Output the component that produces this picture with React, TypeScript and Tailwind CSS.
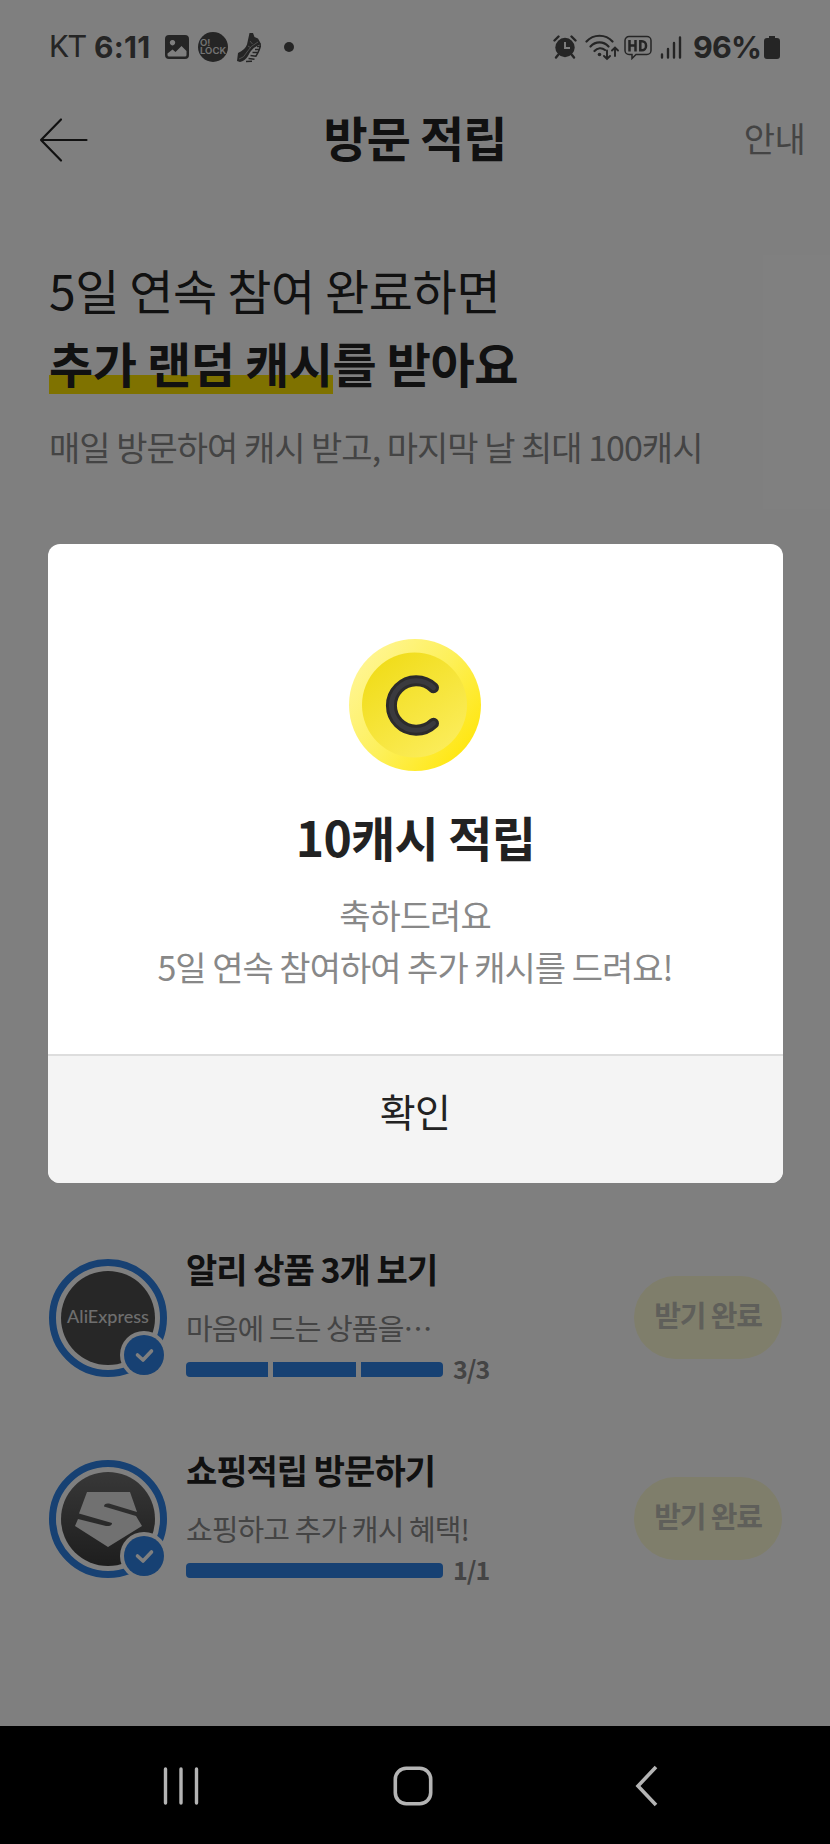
import React from 'react';

interface Mission {
  id: string;
  title: string;
  desc: string;
  done: number;
  total: number;
  logo: React.ReactNode;
}

const missions: Mission[] = [
  { id: 'ali', title: '알리 상품 3개 보기', desc: '마음에 드는 상품을…', done: 3, total: 3, logo: <AliLogo /> },
  { id: 'shop', title: '쇼핑적립 방문하기', desc: '쇼핑하고 추가 캐시 혜택!', done: 1, total: 1, logo: <ShopLogo /> },
];

function AliLogo() {
  return (
    <div className="w-[94px] h-[94px] rounded-full bg-[#4e4e4e] flex items-center justify-center">
      <span className="font-['Lato'] text-[18px] leading-none font-medium text-[#dcdcdc] -mt-1">AliExpress</span>
    </div>
  );
}

function ShopLogo() {
  return (
    <div className="w-[94px] h-[94px] rounded-full bg-linear-to-b from-[#707070] to-[#3c3c3c]">
      <svg viewBox="0 0 94 94" className="w-full h-full">
        <path d="M26 20H69L76 40L48 31.500Q43 31 43 34.500L75 44L81 54L47 75L14 54L17 47L45 54Q51 54.500 51 51L18 41.500Z" fill="#e2e2e2" />
      </svg>
    </div>
  );
}

function StatusBar() {
  return (
    <div className="h-[94px] pl-[49px] pr-[50px] flex items-center justify-between text-[#4a4a4a] font-['Roboto']">
      <div className="flex items-center">
        <span className="text-[31px] font-normal w-[45px] tracking-[-0.4px]">KT</span>
        <span className="font-['Inter'] text-[30px] font-bold w-[71px] tracking-[0.3px]">6:11</span>
        <svg viewBox="0 0 24 24" className="w-6 h-6">
          <path fillRule="evenodd" fill="currentColor" d="M4 0h16a4 4 0 0 1 4 4v16a4 4 0 0 1-4 4H4a4 4 0 0 1-4-4V4a4 4 0 0 1 4-4z M7.500 5a2.700 2.700 0 1 0 .01 0z M2.500 18.500V20q0 1.500 1.500 1.500h16q1.500 0 1.500-1.500v-4L16.500 11l-6 6-3-2.500z" />
        </svg>
        <div className="ml-[9px] w-[30px] h-[30px] rounded-full bg-[#4a4a4a] text-[#e8e8e8] font-['Inter'] font-semibold text-[9.5px] leading-[8px] pl-[2px] pt-[7px]">
          <div>O!</div>
          <div>LOCK</div>
        </div>
        <svg viewBox="0 0 26 31" className="ml-[9px] w-[26px] h-[31px]">
          <path fill="currentColor" d="M12.500 1H16L17.500 5L21 6.500L24 12L20 14Q14 17.500 11 24Q8 29 3 30L0 29L1 21Q8 18 10 12.500Z" />
          <path d="M20 14.500h4M18 17.500h5M15.500 20.500h6M13.500 23.500l6 .8M11.500 26.500l6 .8M9 29.500l6-.3M23 12q1 4-4 12" stroke="currentColor" strokeWidth="1.500" fill="none" />
          <path d="M2 27Q7 26 10 20T21 10M11 14l3 2M13 9l2.500 3" stroke="#b8b8b8" strokeWidth="0.800" fill="none" />
        </svg>
        <div className="ml-[21px] w-[10px] h-[10px] rounded-full bg-[#4a4a4a]" />
      </div>
      <div className="flex items-center">
        <svg viewBox="0 0 24 24" className="w-6 h-6">
          <circle cx="12" cy="12.500" r="9.700" fill="currentColor" />
          <path d="M1.500 5.500l4-4M22.500 5.500l-4-4M5 20l-2 2.500M19 20l2 2.500" stroke="currentColor" strokeWidth="2.400" strokeLinecap="round" />
          <path d="M12 7v6h5" stroke="#fff" strokeWidth="1.900" fill="none" />
        </svg>
        <svg viewBox="0 0 34 28" className="ml-2 w-[34px] h-7" fill="none" stroke="currentColor" strokeWidth="2.200" strokeLinecap="round">
          <path d="M1.500 8.500C8.500.800 20.500.800 27.500 8.500M5.500 13.500c5-5.500 13-5.500 18 0M9.500 18c3-3.500 7.500-3.500 10.500-1" />
          <circle cx="14.500" cy="21.500" r="1.800" fill="currentColor" stroke="none" />
          <path d="M22 17.500v8M19 23l3 3 3-3M30 23v-8M27 17.500l3-3 3 3" strokeWidth="1.900" />
        </svg>
        <svg viewBox="0 0 28 25" className="ml-[5px] w-7 h-[25px]" fill="none" stroke="currentColor">
          <path d="M5 1.500h18a4 4 0 0 1 4 4v10a4 4 0 0 1-4 4H12l-4 4v-4H5a4 4 0 0 1-4-4v-10a4 4 0 0 1 4-4z" strokeWidth="1.500" />
          <path d="M5.500 5v11.500M11.500 5v11.500M5.500 10.500h6M16.300 6.200v9h1.700a4 4 0 0 0 4-4v-1a4 4 0 0 0-4-4z" strokeWidth="2.500" />
        </svg>
        <svg viewBox="0 0 22 23" className="ml-2 w-[22px] h-[23px]" stroke="currentColor" strokeWidth="2.400" strokeLinecap="round">
          <path d="M2 18.500v3M8 13v8.500M14 7v14.500M20 1.500v20" />
        </svg>
        <span className="ml-[11px] font-['Inter'] text-[30.5px] font-bold w-[71px] tracking-[-0.8px]">96%</span>
        <svg viewBox="0 0 16 23" className="w-4 h-[23px]">
          <path fill="currentColor" d="M5 0h6v2h2a3 3 0 0 1 3 3v15a3 3 0 0 1-3 3H3a3 3 0 0 1-3-3V5a3 3 0 0 1 3-3h2z" />
        </svg>
      </div>
    </div>
  );
}

function Header() {
  return (
    <header className="h-[92px] px-[25px] grid grid-cols-3 items-center text-[#222]">
      <svg viewBox="0 0 50 46" className="ml-[14px] w-[50px] h-[46px]" fill="none" stroke="currentColor" strokeWidth="2.200" strokeLinecap="round" strokeLinejoin="round">
        <path d="M22 2.500L2 23l20 20.500M2 23h45.500" />
      </svg>
      <h1 className="text-[48px] leading-[60px] font-bold text-center tracking-[-0.9px] whitespace-nowrap -mt-[9px]">방문 적립</h1>
      <span className="text-[34px] leading-[40px] text-[#888] text-right tracking-[-0.7px] -mt-[5px]">안내</span>
    </header>
  );
}

function MissionRow({ mission }: { mission: Mission }) {
  return (
    <div className="h-[201px] flex items-start">
      <div className="relative mt-[21px] w-[118px] h-[118px] rounded-full border-[7px] border-[#2e82e6] bg-white flex items-center justify-center shrink-0">
        {mission.logo}
        <div className="absolute left-[64px] top-[65px] w-12 h-12 rounded-full bg-white p-1">
          <div className="w-10 h-10 rounded-full bg-[#2e82e6]">
            <svg viewBox="0 0 40 40" className="w-full h-full" fill="none" stroke="#fff" strokeWidth="3.600" strokeLinecap="round" strokeLinejoin="round">
              <path d="M13.500 20l5.500 5 8.500-9" />
            </svg>
          </div>
        </div>
      </div>
      <div className="ml-[19px] mt-[9px] w-[310px]">
        <h3 className="text-[34px] leading-[44px] font-bold text-[#222] tracking-[-1px] whitespace-nowrap">{mission.title}</h3>
        <p className="mt-4 text-[29px] leading-[40px] text-[#888] tracking-[-0.9px] whitespace-nowrap">{mission.desc}</p>
        <div className="mt-2 h-[28px] flex items-center">
          <div className="w-[257px] h-[15px] rounded-[4px] overflow-hidden flex gap-[5px]">
            {Array.from({ length: mission.total }).map((_, i) => (
              <div key={i} className={`flex-1 ${i < mission.done ? 'bg-[#2e82e6]' : 'bg-gray-200'}`} />
            ))}
          </div>
          <span className="ml-[10px] -mt-[3px] text-[25px] leading-[28px] font-bold text-[#888] tracking-[-1px]">{mission.done}/{mission.total}</span>
        </div>
      </div>
      <button className="ml-auto mt-[38px] w-[148px] h-[83px] rounded-full bg-[#fefcd6] text-[#bebeb4] text-[29px] font-bold tracking-[-1.2px] pb-[5px]">
        받기 완료
      </button>
    </div>
  );
}

function Coin() {
  return (
    <svg viewBox="0 0 136 136" className="w-[136px] h-[136px]">
      <defs>
        <linearGradient id="rim" x1="0.1" y1="0.2" x2="0.9" y2="0.8">
          <stop offset="0" stopColor="#fff58e" />
          <stop offset="0.5" stopColor="#fdf05a" />
          <stop offset="1" stopColor="#ffe714" />
        </linearGradient>
        <linearGradient id="face" x1="0.2" y1="0.1" x2="0.8" y2="0.9">
          <stop offset="0" stopColor="#f1dd1c" />
          <stop offset="1" stopColor="#fbec58" />
        </linearGradient>
      </defs>
      <circle cx="68" cy="68" r="66" fill="url(#rim)" />
      <circle cx="67.500" cy="68" r="52.500" fill="url(#face)" />
      <path d="M86.500 50.700A24.800 24.800 0 1 0 86.500 86.300" fill="none" stroke="#2c2b2b" strokeWidth="11" strokeLinecap="round" />
      <path d="M86.500 50.700A24.800 24.800 0 1 0 86.500 86.300" fill="none" stroke="#3a3a3e" strokeWidth="5" strokeLinecap="round" />
    </svg>
  );
}

function RewardDialog() {
  return (
    <div className="absolute inset-0 bg-black/50 flex justify-center items-start pt-[544px]">
      <div className="w-[735px] h-[639px] bg-white rounded-[12px] overflow-hidden flex flex-col">
        <div className="flex-1 flex flex-col items-center pt-[93px]">
          <Coin />
          <h2 className="mt-[33px] pl-px text-[48px] leading-[60px] font-bold text-[#222] tracking-[-0.7px]">10캐시 적립</h2>
          <p className="mt-[23px] text-[34px] leading-[52px] text-[#888] tracking-[-1px] text-center">
            축하드려요<br />
            5일 연속 참여하여 추가 캐시를 드려요!
          </p>
        </div>
        <button className="h-[129px] shrink-0 border-t-2 border-[#ddd] bg-[#f4f4f4] text-[39px] text-[#222] tracking-[-0.7px] pb-[18px]">확인</button>
      </div>
    </div>
  );
}

function NavBar() {
  return (
    <nav className="h-[118px] pt-[2px] bg-black flex items-center justify-between pl-[160px] pr-[164px]">
      <svg viewBox="0 0 42 42" className="w-[42px] h-[42px]" stroke="#b4b4b4" strokeWidth="3.400" strokeLinecap="round">
        <path d="M5.500 4v34M21 4v34M36.500 4v34" />
      </svg>
      <svg viewBox="0 0 42 42" className="w-[42px] h-[42px]" fill="none" stroke="#b4b4b4" strokeWidth="3.600">
        <rect x="3.300" y="3.300" width="35.400" height="35.400" rx="11" />
      </svg>
      <svg viewBox="0 0 42 42" className="w-[42px] h-[42px]" fill="none" stroke="#b4b4b4" strokeWidth="3.600">
        <path d="M32 2L14 21l18 19" />
      </svg>
    </nav>
  );
}

export default function App() {
  return (
    <div className="w-[830px] h-[1844px] overflow-hidden bg-white font-['Noto_Sans_CJK_KR',sans-serif]">
      <div className="relative h-[1726px] overflow-hidden bg-white">
        <StatusBar />
        <Header />
        <section className="pl-[49px] pt-[67px] text-[48px] leading-[73px] text-[#222] tracking-[-0.4px]">
          <p>5일 연속 참여 완료하면</p>
          <p className="font-bold">
            <span className="bg-[linear-gradient(to_top,transparent_3px,#fee500_3px,#fee500_22px,transparent_22px)]">추가 랜덤 캐시</span>를 받아요
          </p>
          <p className="mt-[26px] text-[34px] leading-[44px] text-[#888] tracking-[-1px]">매일 방문하여 캐시 받고, 마지막 날 최대 100캐시</p>
        </section>
        <section className="mt-[769px] pl-[49px] pr-[48px]">
          {missions.map(m => (
            <MissionRow key={m.id} mission={m} />
          ))}
        </section>
        <RewardDialog />
      </div>
      <NavBar />
    </div>
  );
}
